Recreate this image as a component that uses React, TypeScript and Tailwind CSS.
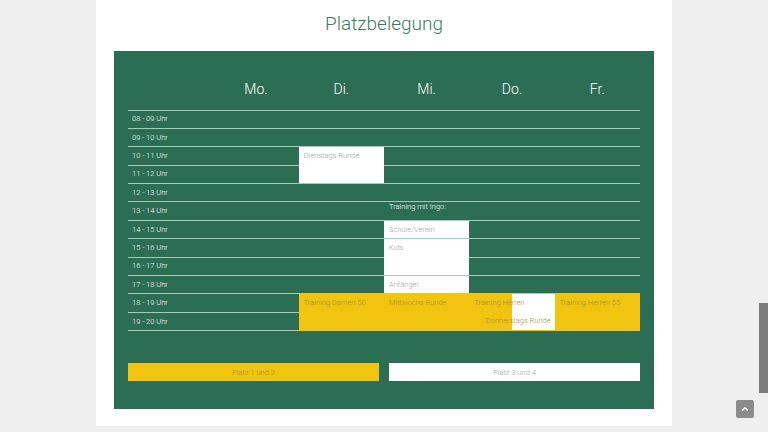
import { ChevronUp } from "lucide-react";

type Cell = {
  text?: string;
  kind?: "white" | "yellow" | "label" | "split";
  rowSpan?: number;
  sub?: string;
};

const days = ["Mo.", "Di.", "Mi.", "Do.", "Fr."];

const rows: { time: string; cells: (Cell | null)[] }[] = [
  { time: "08 - 09 Uhr", cells: [{}, {}, {}, {}, {}] },
  { time: "09 - 10 Uhr", cells: [{}, {}, {}, {}, {}] },
  { time: "10 - 11 Uhr", cells: [{}, { text: "Dienstags Runde", kind: "white", rowSpan: 2 }, {}, {}, {}] },
  { time: "11 - 12 Uhr", cells: [{}, null, {}, {}, {}] },
  { time: "12 - 13 Uhr", cells: [{}, {}, {}, {}, {}] },
  { time: "13 - 14 Uhr", cells: [{}, {}, { text: "Training mit Ingo:", kind: "label" }, {}, {}] },
  { time: "14 - 15 Uhr", cells: [{}, {}, { text: "Schule/Verein", kind: "white" }, {}, {}] },
  { time: "15 - 16 Uhr", cells: [{}, {}, { text: "Kids", kind: "white", rowSpan: 2 }, {}, {}] },
  { time: "16 - 17 Uhr", cells: [{}, {}, null, {}, {}] },
  { time: "17 - 18 Uhr", cells: [{}, {}, { text: "Anfänger", kind: "white" }, {}, {}] },
  {
    time: "18 - 19 Uhr",
    cells: [
      {},
      { text: "Training Damen 50", kind: "yellow", rowSpan: 2 },
      { text: "Mittwochs Runde", kind: "yellow", rowSpan: 2 },
      { text: "Training Herren", sub: "Donnerstags Runde", kind: "split", rowSpan: 2 },
      { text: "Training Herren 55", kind: "yellow", rowSpan: 2 },
    ],
  },
  { time: "19 - 20 Uhr", cells: [{}, null, null, null, null] },
];

function renderCell(cell: Cell, i: number) {
  const base = "border-b border-[#a3ccb9] align-top p-0";
  if (cell.kind === "white") {
    return (
      <td key={i} rowSpan={cell.rowSpan} className={`${base} bg-white`}>
        <div className="pl-[5px] pt-[4px] text-[7.5px] leading-[10px] font-light text-[#a0a0a0]">{cell.text}</div>
      </td>
    );
  }
  if (cell.kind === "yellow") {
    return (
      <td key={i} rowSpan={cell.rowSpan} className={`${base} bg-[#f1c40f] border-[#f1c40f]`}>
        <div className="pl-[5px] pt-[4px] text-[7.5px] leading-[10px] font-light text-[#a08d3c]">{cell.text}</div>
      </td>
    );
  }
  if (cell.kind === "split") {
    return (
      <td
        key={i}
        rowSpan={cell.rowSpan}
        className={`${base} border-[#f1c40f] bg-[linear-gradient(to_right,#f1c40f_50%,#ffffff_50%)]`}
      >
        <div className="flex flex-col h-[36px] text-[7.5px] leading-[10px] font-light text-[#a08d3c]">
          <div className="pl-[5px] pt-[4px]">{cell.text}</div>
          <div className="mt-auto pb-[4px] pr-[4px] text-right">{cell.sub}</div>
        </div>
      </td>
    );
  }
  if (cell.kind === "label") {
    return (
      <td key={i} className={`${base} align-middle`}>
        <div className="pl-[5px] text-[7.5px] leading-[10px] font-light text-white">{cell.text}</div>
      </td>
    );
  }
  return <td key={i} className={base}></td>;
}

export default function App() {
  return (
    <div className="min-h-screen bg-[#efefef] font-['Roboto',sans-serif]">
      <div className="w-[576px] mx-auto bg-white pt-[10px] pb-[17px] px-[18px]">
        <h2 className="text-center text-[19px] leading-[28px] font-light text-[#41795f] mb-[13px]">
          Platzbelegung
        </h2>

        {/* Green panel */}
        <div className="bg-[#2b6e53] pt-[18px] px-[14px] pb-[28px]">
          <table className="w-[512px] table-fixed border-collapse">
            <thead>
              <tr className="h-[41px]">
                <th className="border-b border-[#a3ccb9] p-0"></th>
                {days.map((d) => (
                  <th key={d} className="border-b border-[#a3ccb9] p-0 text-[14px] font-light text-white text-center align-middle">
                    {d}
                  </th>
                ))}
              </tr>
            </thead>
            <tbody>
              {rows.map((row) => (
                <tr key={row.time} className="h-[18.4px]">
                  <td className="border-b border-[#a3ccb9] p-0 pl-[4px] text-[7.5px] leading-[10px] font-light text-white align-middle">
                    {row.time}
                  </td>
                  {row.cells.map((c, i) => (c ? renderCell(c, i) : null))}
                </tr>
              ))}
            </tbody>
          </table>

          <div className="grid grid-cols-2 gap-[10px] mt-[32px]">
            <button className="h-[18px] bg-[#f1c40f] text-[7.5px] font-light text-[#a08d3c]">Platz 1 und 2</button>
            <button className="h-[18px] bg-white text-[7.5px] font-light text-[#a0a0a0]">Platz 3 und 4</button>
          </div>
        </div>
      </div>

      {/* scroll thumb + back to top */}
      <div className="fixed right-0 top-[303px] w-[9px] h-[90px] bg-[#7b7b7b]"></div>
      <div className="fixed left-[736px] top-[400px] w-[18px] h-[18px] rounded-[2px] bg-[#8c8c8c] flex items-center justify-center">
        <ChevronUp className="w-[10px] h-[10px] text-white" strokeWidth={3} />
      </div>
    </div>
  );
}
